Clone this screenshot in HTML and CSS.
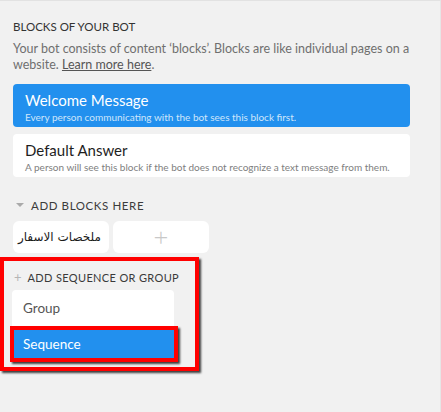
FILE: index.html
```html
<!DOCTYPE html>
<html lang="en">
<head>
<meta charset="UTF-8" />
<meta name="viewport" content="width=device-width, initial-scale=1.0"/>
<title>Blocks of your bot</title>
<link rel="stylesheet" href="styles.css">
</head>
<body>

<div class="panel">
  <h2 class="section-title">Blocks of your bot</h2>
  <p class="intro">Your bot consists of content ‘blocks’. Blocks are like individual pages on a website. <a href="#">Learn more here</a>.</p>

  <div class="block-card primary">
    <div class="block-name">Welcome Message</div>
    <div class="block-desc">Every person communicating with the bot sees this block first.</div>
  </div>
  <div class="block-card">
    <div class="block-name">Default Answer</div>
    <div class="block-desc">A person will see this block if the bot does not recognize a text message from them.</div>
  </div>

  <div class="group-head"><span class="caret"></span>Add blocks here</div>
  <div class="tiles">
    <div class="tile" dir="rtl">ملخصات الاسفار</div>
    <div class="tile add">+</div>
  </div>

  <div class="add-menu">
    <span class="highlight outer"></span>
    <div class="group-head"><span class="plus">+</span>Add sequence or group</div>
    <div class="menu">
      <div class="menu-item">Group</div>
      <div class="menu-item active">Sequence<span class="highlight inner"></span></div>
    </div>
  </div>
</div>

</body>
</html>
```

FILE: styles.css
```css
* {
  margin: 0;
  padding: 0;
  box-sizing: border-box;
}

body {
  background-color: #f1f1f1;
  font-family: Lato, "Noto Sans", Arial, sans-serif;
  border-top: 1px solid #e2e2e2;
  border-right: 1px solid #e6e6e6;
  height: 412px;
  overflow: hidden;
}

.panel {
  padding: 19px 30px 0 13px;
}

.section-title {
  font-size: 11.5px;
  font-weight: 400;
  text-transform: uppercase;
  color: #333;
  line-height: 14px;
}

.intro {
  margin-top: 7px;
  font-size: 12.5px;
  line-height: 16px;
  color: #6f6f6f;
  width: 398px;
}

.intro a {
  color: #555;
}

.block-card {
  background: #fff;
  border-radius: 4px;
  height: 43px;
  padding: 6px 12px 0 12px;
  margin-top: 7px;
}

.block-card.primary {
  background: #2290ee;
  margin-top: 11px;
}

.block-name {
  font-size: 15px;
  line-height: 20px;
  color: #1e1e1e;
}

.block-desc {
  font-size: 10px;
  line-height: 14px;
  color: #808080;
  white-space: nowrap;
}

.primary .block-name {
  color: #fff;
}

.primary .block-desc {
  color: #cfe6fb;
}

.group-head {
  display: flex;
  align-items: center;
  font-size: 11.5px;
  letter-spacing: 0.6px;
  text-transform: uppercase;
  color: #3c3c3c;
  height: 14px;
  white-space: nowrap;
}

.panel > .group-head {
  margin-top: 21px;
  padding-left: 3px;
}

.caret {
  width: 0;
  height: 0;
  border-left: 4px solid transparent;
  border-right: 4px solid transparent;
  border-top: 4px solid #aaa;
  margin-right: 7px;
}

.plus {
  color: #b5b5b5;
  font-size: 13px;
  margin-right: 6px;
  letter-spacing: 0;
}

.tiles {
  display: flex;
  gap: 4px;
  margin-top: 9px;
}

.tile {
  width: 96px;
  height: 32px;
  background: #fff;
  border-radius: 6px;
  display: flex;
  align-items: center;
  padding: 0 8px;
  font-family: "DejaVu Sans", "Noto Sans", sans-serif;
  font-size: 12px;
  color: #1b1b1b;
  white-space: nowrap;
}

.tile.add {
  justify-content: center;
  font-family: "Open Sans", sans-serif;
  font-size: 26px;
  font-weight: 300;
  color: #c8c8c8;
}

.add-menu {
  position: relative;
  margin-top: 17px;
  width: 176px;
}

.add-menu .group-head {
  padding-left: 1px;
  font-size: 11px;
  letter-spacing: 0.35px;
  color: #3a3a3a;
}

.menu {
  margin-top: 6px;
  margin-left: -1px;
  width: 162px;
  background: #fff;
  border-radius: 4px;
  padding-bottom: 4px;
}

.menu-item {
  position: relative;
  height: 36px;
  padding-left: 11px;
  display: flex;
  align-items: center;
  font-size: 13.5px;
  color: #555;
}

.menu-item.active {
  background: #2290ee;
  color: #fff;
  height: 28px;
  width: 160px;
  margin: 4px 0 0 2px;
  padding-left: 9px;
}

/* red markers drawn over the menu */
.highlight {
  position: absolute;
  border: 4px solid #ff0000;
  box-shadow: 2px 2px 2px rgba(0, 0, 0, 0.75);
  pointer-events: none;
}

.highlight.outer {
  left: -13px;
  top: -13px;
  width: 199px;
  height: 114px;
}

.highlight.inner {
  left: -4px;
  top: -4px;
  width: 168px;
  height: 36px;
}
```
